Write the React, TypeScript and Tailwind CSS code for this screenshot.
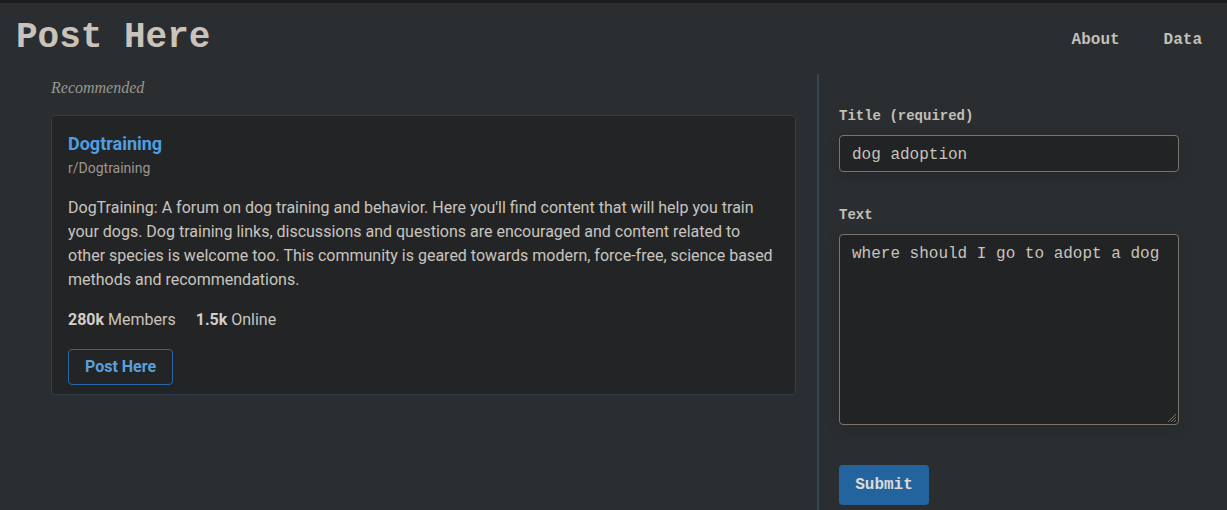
import React from "react";

const mono = { fontFamily: '"Liberation Mono", "DejaVu Sans Mono", monospace' };

export default function App() {
  return (
    <div className="min-h-screen w-full bg-[#2b2e31] border-t-[3px] border-[#1c1d1e] font-['Roboto',sans-serif]">
      <header className="flex h-[71px] items-center justify-between pl-4 pr-[25px]">
        <h1 className="text-[36px] font-bold leading-none text-[#c9c3bb] font-['Liberation_Mono',monospace] pb-[2px]">
          Post Here
        </h1>
        <nav className="flex items-center gap-[44px] pt-[3px] text-[16px] font-bold text-[#c4bfb8] font-['Liberation_Mono',monospace]">
          <a>About</a>
          <a>Data</a>
        </nav>
      </header>
      <main className="flex">
        <section className="w-[817px] shrink-0 pl-[51px] pr-[21px] pb-8">
          <p className="pt-[2px] text-[16px] italic leading-[24px] text-[#9c978f] font-['Liberation_Serif',serif]">
            Recommended
          </p>
          <div className="mt-[15px] rounded-[4px] border border-[#2f3b4a] bg-[#232426] px-4 pt-[14px] pb-2">
            <h2 className="text-[18px] font-bold leading-[28px] text-[#4f9fe0]">Dogtraining</h2>
            <p className="text-[14px] leading-[20px] text-[#9c978f]">r/Dogtraining</p>
            <p className="mt-[18px] text-[16px] leading-[24px] text-[#c9c5be]">
              DogTraining: A forum on dog training and behavior. Here you'll find content that will help you train your dogs. Dog training links, discussions and questions are encouraged and content related to other species is welcome too. This community is geared towards modern, force-free, science based methods and recommendations.
            </p>
            <div className="mt-4 flex gap-5 text-[16px] leading-[24px] text-[#c9c5be]">
              <span>
                <b className="font-bold text-[#d2cec8]">280k</b> Members
              </span>
              <span>
                <b className="font-bold text-[#d2cec8]">1.5k</b> Online
              </span>
            </div>
            <button className="mt-[17px] mb-[1px] h-[36px] w-[105px] rounded-[4px] border border-[#2868a4] text-[16px] font-bold text-[#5aa0da]">
              Post Here
            </button>
          </div>
        </section>
        <div className="w-[2px] shrink-0 bg-[#34465a] min-h-[440px]" />
        <section className="flex-1 pl-[20px] pr-12 pt-[32px]" style={mono}>
          <label className="block text-[14px] font-bold leading-[20px] text-[#c4bfb8]">Title (required)</label>
          <div className="mt-[9px] flex h-[37px] w-[340px] items-center rounded-[4px] border border-[#7a746a] bg-[#222325] px-[12px] pt-[2px] text-[16px] text-[#c8c3bc] shadow-[0_4px_16px_rgba(0,0,0,0.12)]">
            dog adoption
          </div>
          <label className="mt-[33px] block text-[14px] font-bold leading-[20px] text-[#c4bfb8]">Text</label>
          <div className="relative mt-[9px] h-[191px] w-[340px] rounded-[4px] border border-[#7a746a] bg-[#222325] px-[12px] pt-[8px] text-[16px] leading-[22px] text-[#c8c3bc] shadow-[0_4px_16px_rgba(0,0,0,0.12)]">
            where should I go to adopt a dog
            <svg className="absolute bottom-[1px] right-[1px]" width="10" height="10" viewBox="0 0 10 10">
              <path d="M9 1L1 9M9 4L4 9M9 7L7 9" stroke="#7a746a" strokeWidth="1" />
            </svg>
          </div>
          <button className="mt-[40px] h-[40px] w-[90px] rounded-[4px] bg-[#23649e] text-[16px] font-bold text-[#dcdad6]">
            Submit
          </button>
        </section>
      </main>
    </div>
  );
}
